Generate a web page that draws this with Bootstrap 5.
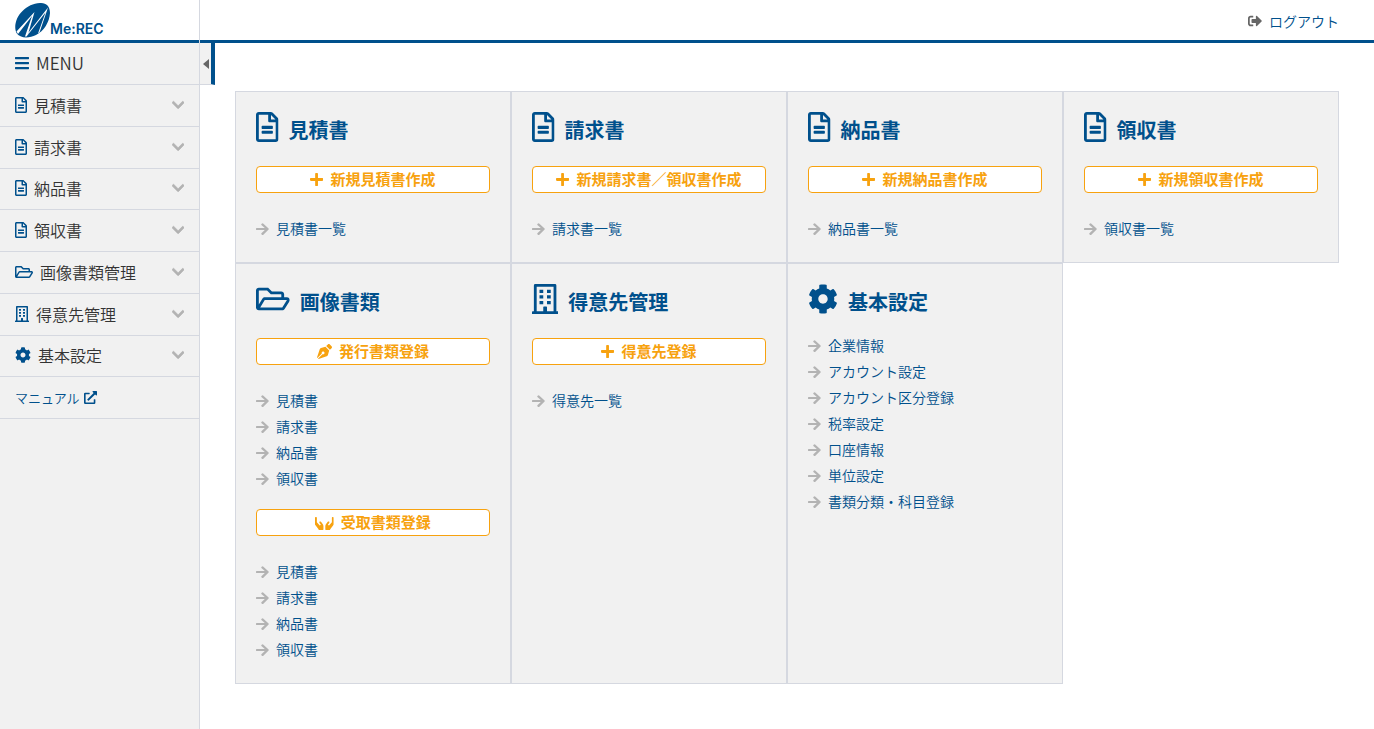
<!DOCTYPE html>
<html lang="ja">
<head>
<meta charset="utf-8">
<meta name="viewport" content="width=device-width, initial-scale=1">
<title>Me:REC</title>
<link href="https://cdn.jsdelivr.net/npm/bootstrap@5.3.0/dist/css/bootstrap.min.css" rel="stylesheet">
<style>
:root { --brand: #00508c; --line: #d5d8e0; --panel: #f1f1f1; --accent: #f7a20f; --muted: #b3b3b3; }
body { font-family: "Noto Sans CJK JP", sans-serif; font-size: 14px; font-weight: 350; color: #333; background: #fff; }
a { color: var(--brand); text-decoration: none; }
a:hover { text-decoration: underline; }
.ico { height: 1em; width: auto; fill: currentColor; flex: none; display: block; }
.app-head { height: 43px; border-bottom: 3px solid var(--brand); }
.brand-box { width: 200px; height: 43px; border-right: 1px solid var(--line); padding-left: 15px; }
.brand-name { font: 600 14px/18px Inter, sans-serif; color: var(--brand); margin-bottom: 5px; }
.logout { padding: 2px 35px 0 0; gap: 7px; }
.logout .ico { color: #666; }
.side { width: 200px; flex: none; background: var(--panel); border-right: 1px solid var(--line); font-size: 16px; }
.menu-title { height: 42px; padding: 0 15px 2px; gap: 7px; border-bottom: 1px solid var(--line); font-size: 17px; }
.menu-title .ico { height: 16px; }
.menu-title .ico, .menu-btn .ico:first-child { color: var(--brand); }
.menu-list { height: 334px; }
.menu-list li { border-bottom: 1px solid var(--line); flex: 1 1 0; }
.menu-btn { padding: 0 15px 1px; gap: 7px; color: #333; background: none; border: 0; font-weight: 350; }
.menu-btn .chev { font-size: 14px; color: var(--muted); margin-left: auto; stroke: currentColor; stroke-width: 24px; }
.manual { padding: 0 15px; gap: 4px; font-size: 13px; }
.fold { top: 0; left: 0; width: 15px; height: 42px; padding: 0 0 0 3px; background: var(--panel); border: 0; border-right: 4px solid var(--brand); border-bottom: 1px solid var(--line); color: #666; }
.fold .ico { height: 10px; }
.board { padding: 48px 35px 45px; }
.tile { background: var(--panel); border: 1px solid var(--line); padding: 20px; }
.tile h2 { font-size: 20px; line-height: 24px; font-weight: 700; color: var(--brand); gap: 10px; margin: 0 0 24px; }
.tile h2 .ico { height: 30px; }
.tile h2.tight { margin-bottom: 19px; }
.btn-make { display: flex; align-items: center; justify-content: center; gap: 7px; width: 100%; height: 27px; padding: 0 0 1px; font-size: 15px; line-height: 24px; font-weight: 700; border-radius: 4px; background: #fff; border: 1px solid var(--accent); color: var(--accent); margin-bottom: 23px; }
.btn-make:hover { background: var(--accent); color: #fff; }
.btn-make .ico { height: 15px; }
.links { margin: 0; }
.links + .btn-make { margin-top: 17px; }
.links a { display: flex; align-items: flex-start; gap: 7px; height: 26px; line-height: 24px; }
.links a::before { content: ""; flex: none; width: 13px; height: 14px; margin-top: 6px; background: var(--muted); clip-path: path("M5.4 2.1 6.1 1.4Q6.6 .9 7.1 1.4L12.6 6.5Q13 7 12.6 7.5L7.1 12.9Q6.6 13.3 6.1 12.9L5.4 12.2Q5 11.7 5.4 11.2L8.8 8.1H.7Q0 8.1 0 7.5V6.5Q0 5.9 .7 5.9H8.8L5.4 3.1Q5 2.6 5.4 2.1Z"); }
</style>
</head>
<body class="min-vh-100 d-flex flex-column">
<svg class="d-none" aria-hidden="true">
<symbol id="bars" viewBox="0 0 448 512"><path d="M16 132h416c8.800 0 16-7.200 16-16V76c0-8.800-7.200-16-16-16H16C7.200 60 0 67.200 0 76v40c0 8.800 7.200 16 16 16zm0 160h416c8.800 0 16-7.200 16-16v-40c0-8.800-7.200-16-16-16H16c-8.800 0-16 7.200-16 16v40c0 8.800 7.200 16 16 16zm0 160h416c8.800 0 16-7.200 16-16v-40c0-8.800-7.200-16-16-16H16c-8.800 0-16 7.200-16 16v40c0 8.800 7.200 16 16 16z"/></symbol>
<symbol id="file" viewBox="0 0 384 512"><path d="M288 248v28c0 6.600-5.400 12-12 12H108c-6.600 0-12-5.400-12-12v-28c0-6.600 5.400-12 12-12h168c6.600 0 12 5.400 12 12zm-12 72H108c-6.600 0-12 5.400-12 12v28c0 6.600 5.400 12 12 12h168c6.600 0 12-5.400 12-12v-28c0-6.600-5.400-12-12-12zm108-188.100V464c0 26.500-21.500 48-48 48H48c-26.500 0-48-21.500-48-48V48C0 21.500 21.500 0 48 0h204.100C264.800 0 277 5.100 286 14.100L369.900 98c9 8.900 14.100 21.200 14.100 33.900zm-128-80V128h76.100L256 51.900zM336 464V176H232c-13.300 0-24-10.700-24-24V48H48v416h288z"/></symbol>
<symbol id="folder" viewBox="0 0 576 512"><path fill-rule="evenodd" d="M527.900 224H480v-48c0-26.500-21.500-48-48-48H272l-64-64H48C21.500 64 0 85.500 0 112v288c0 26.500 21.500 48 48 48h400c16.500 0 31.900-8.500 40.700-22.600l79.900-128c20-31.900-3-73.400-40.700-73.400zM48 118c0-3.300 2.700-6 6-6h134.100l64 64H426c3.300 0 6 2.700 6 6v42H152c-16.800 0-32.400 8.800-41.100 23.200L48 351.400zm400 282H72l77.200-128H528z"/></symbol>
<symbol id="building" viewBox="0 0 448 512"><path fill-rule="evenodd" d="M0 476q0-12 12-12H32V24Q32 0 56 0H392q24 0 24 24V464H436q12 0 12 12V512H0ZM80 48V464H192V396q0-12 12-12H244q12 0 12 12V464H368V48Z"/><path d="M128 96h64v56h-64zM256 96h64v56h-64zM128 192h64v56h-64zM256 192h64v56h-64zM128 288h64v56h-64zM256 288h64v56h-64z"/></symbol>
<symbol id="cog" viewBox="0 0 512 512"><path d="M487.400 315.700l-42.600-24.600c4.300-23.200 4.300-47 0-70.200l42.600-24.600c4.900-2.800 7.100-8.600 5.500-14-11.100-35.600-30-67.800-54.700-94.600-3.800-4.100-10-5.100-14.800-2.300L380.800 110c-17.900-15.400-38.500-27.300-60.800-35.100V25.800c0-5.600-3.900-10.500-9.400-11.700-36.700-8.200-74.300-7.800-109.200 0-5.500 1.200-9.400 6.100-9.400 11.700V75c-22.200 7.900-42.800 19.800-60.800 35.100L88.700 85.500c-4.900-2.800-11-1.900-14.800 2.300-24.700 26.700-43.600 58.900-54.700 94.600-1.700 5.400.6 11.200 5.500 14L67.300 221c-4.300 23.200-4.300 47 0 70.200l-42.600 24.600c-4.900 2.800-7.100 8.600-5.500 14 11.100 35.600 30 67.800 54.700 94.600 3.800 4.100 10 5.100 14.800 2.300l42.600-24.600c17.900 15.400 38.500 27.300 60.800 35.100v49.200c0 5.600 3.900 10.500 9.400 11.700 36.700 8.200 74.300 7.800 109.200 0 5.500-1.200 9.400-6.100 9.400-11.700v-49.200c22.200-7.900 42.800-19.800 60.800-35.100l42.600 24.600c4.900 2.800 11 1.900 14.800-2.300 24.700-26.700 43.600-58.900 54.700-94.600 1.500-5.500-.7-11.300-5.600-14.100zM256 336c-44.100 0-80-35.900-80-80s35.900-80 80-80 80 35.900 80 80-35.900 80-80 80z"/></symbol>
<symbol id="chev" viewBox="0 0 448 512"><path d="M207 381.500L12.700 187.100c-9.400-9.400-9.400-24.600 0-33.900l22.700-22.700c9.400-9.400 24.500-9.400 33.900 0L224 284.500l154.700-154c9.400-9.300 24.500-9.300 33.900 0l22.700 22.700c9.400 9.400 9.400 24.600 0 33.900L241 381.500c-9.400 9.400-24.600 9.400-34 0z"/></symbol>
<symbol id="plus" viewBox="0 0 448 512"><path d="M416 208H272V64c0-17.700-14.300-32-32-32h-32c-17.700 0-32 14.300-32 32v144H32c-17.700 0-32 14.300-32 32v32c0 17.700 14.300 32 32 32h144v144c0 17.700 14.300 32 32 32h32c17.700 0 32-14.300 32-32V304h144c17.700 0 32-14.300 32-32v-32c0-17.700-14.300-32-32-32z"/></symbol>
<symbol id="signout" viewBox="0 0 512 512"><path d="M497 273L329 441c-15 15-41 4.500-41-17v-96H152c-13.300 0-24-10.700-24-24v-96c0-13.300 10.700-24 24-24h136V88c0-21.400 25.900-32 41-17l168 168c9.300 9.400 9.300 24.600 0 34zM192 436v-40c0-6.600-5.400-12-12-12H96c-17.700 0-32-14.300-32-32V160c0-17.700 14.300-32 32-32h84c6.600 0 12-5.400 12-12V76c0-6.600-5.400-12-12-12H96c-53 0-96 43-96 96v192c0 53 43 96 96 96h84c6.600 0 12-5.400 12-12z"/></symbol>
<symbol id="ext" viewBox="0 0 512 512"><path d="M432 320H400a16 16 0 0 0-16 16V448H64V128H208a16 16 0 0 0 16-16V80a16 16 0 0 0-16-16H48A48 48 0 0 0 0 112V464a48 48 0 0 0 48 48H400a48 48 0 0 0 48-48V336A16 16 0 0 0 432 320ZM488 0h-128c-21.400 0-32 25.900-17 41l35.700 35.700L135 320.400a24 24 0 0 0 0 34L157.700 377a24 24 0 0 0 34 0L435.300 133.300 471 169c15 15 41 4.500 41-17V24A24 24 0 0 0 488 0Z"/></symbol>
<symbol id="nib" viewBox="0 0 512 512"><path d="M136.600 138.800a64 64 0 0 0-43.300 41.300L0 460l14.700 14.700L164.800 324.600c-3-6.300-4.800-13.200-4.800-20.600 0-26.500 21.500-48 48-48s48 21.500 48 48-21.500 48-48 48c-7.400 0-14.300-1.800-20.600-4.800L37.300 497.300 52 512l279.900-93.300a64 64 0 0 0 41.300-43.300L416 224 288 96zM497.900 74.200l-60.100-60.100c-18.800-18.800-49.200-18.800-67.900 0l-56.500 56.500 128 128 56.500-56.500c18.800-18.800 18.800-49.200 0-67.900z"/></symbol>
<symbol id="hands" viewBox="0 0 640 512"><path id="hand" d="M204.800 230.400c-10.600-14.100-30.700-17-44.800-6.400-14.100 10.600-17 30.700-6.400 44.800l38.100 50.800c4.800 6.400 4.100 15.300-1.500 20.900l-12.800 12.800c-6.700 6.700-17.600 6.200-23.600-1.100L64 244.400V96c0-17.700-14.300-32-32-32S0 78.300 0 96v218.400c0 10.900 3.700 21.500 10.500 30l104.100 134.300c5 6.500 8.400 13.900 10.400 21.700 1.800 6.900 8.100 11.600 15.300 11.600H272c8.800 0 16-7.200 16-16V384c0-27.700-9-54.600-25.600-76.800z"/><use href="#hand" transform="matrix(-1 0 0 1 640 0)"/></symbol>
</svg>

<header class="app-head d-flex justify-content-between">
  <a class="brand-box d-flex align-items-end position-relative text-decoration-none" href="#">
    <svg class="align-self-start" width="35" height="38" viewBox="0 0 35 38" aria-hidden="true">
      <path fill="#00508c" d="M25 3C31 2.500 35 6 35 13C34.500 22 29 31 21 35C14 38.500 5 38.500 1.500 33C-1.500 27 1 17 7.500 11C12.500 6 18 3.500 25 3Z"/>
      <path fill="#fff" d="M1.500 31.500L19.500 12L13.500 32.500L33 7.500L24.500 32.500L23 33.500L30.500 12.500L11.500 36.500H10L17 16L3 34Z"/>
      <path fill="#00508c" d="M12 35L16.500 29.500L13.600 33.200Z"/>
    </svg>
    <span class="brand-name">Me:REC</span>
  </a>
  <a class="logout d-flex align-items-center" href="#"><svg class="ico" viewBox="0 0 512 512"><use href="#signout"/></svg>ログアウト</a>
</header>

<div class="d-flex flex-grow-1">
  <nav class="side" aria-label="メニュー">
    <div class="menu-title d-flex align-items-center"><svg class="ico" viewBox="0 0 448 512"><use href="#bars"/></svg>MENU</div>
    <ul class="menu-list list-unstyled d-flex flex-column mb-0">
      <li><button type="button" class="menu-btn d-flex align-items-center w-100 h-100"><svg class="ico" viewBox="0 0 384 512"><use href="#file"/></svg>見積書<svg class="ico chev" viewBox="0 0 448 512"><use href="#chev"/></svg></button></li>
      <li><button type="button" class="menu-btn d-flex align-items-center w-100 h-100"><svg class="ico" viewBox="0 0 384 512"><use href="#file"/></svg>請求書<svg class="ico chev" viewBox="0 0 448 512"><use href="#chev"/></svg></button></li>
      <li><button type="button" class="menu-btn d-flex align-items-center w-100 h-100"><svg class="ico" viewBox="0 0 384 512"><use href="#file"/></svg>納品書<svg class="ico chev" viewBox="0 0 448 512"><use href="#chev"/></svg></button></li>
      <li><button type="button" class="menu-btn d-flex align-items-center w-100 h-100"><svg class="ico" viewBox="0 0 384 512"><use href="#file"/></svg>領収書<svg class="ico chev" viewBox="0 0 448 512"><use href="#chev"/></svg></button></li>
      <li><button type="button" class="menu-btn d-flex align-items-center w-100 h-100"><svg class="ico" viewBox="0 0 576 512"><use href="#folder"/></svg>画像書類管理<svg class="ico chev" viewBox="0 0 448 512"><use href="#chev"/></svg></button></li>
      <li><button type="button" class="menu-btn d-flex align-items-center w-100 h-100"><svg class="ico" viewBox="0 0 448 512"><use href="#building"/></svg>得意先管理<svg class="ico chev" viewBox="0 0 448 512"><use href="#chev"/></svg></button></li>
      <li><button type="button" class="menu-btn d-flex align-items-center w-100 h-100"><svg class="ico" viewBox="0 0 512 512"><use href="#cog"/></svg>基本設定<svg class="ico chev" viewBox="0 0 448 512"><use href="#chev"/></svg></button></li>
      <li><a class="manual d-flex align-items-center h-100" href="#">マニュアル<svg class="ico" viewBox="0 0 512 512"><use href="#ext"/></svg></a></li>
    </ul>
  </nav>

  <main class="flex-grow-1 position-relative">
    <button type="button" class="fold position-absolute" aria-label="メニューを閉じる"><svg class="ico" viewBox="0 0 6 10"><path d="M6 0V10L0 5Z"/></svg></button>
    <div class="board">
      <div class="row row-cols-4 g-0">
        <section class="col tile">
          <h2 class="d-flex align-items-end"><svg class="ico" viewBox="0 0 384 512"><use href="#file"/></svg>見積書</h2>
          <button type="button" class="btn-make"><svg class="ico" viewBox="0 0 448 512"><use href="#plus"/></svg>新規見積書作成</button>
          <ul class="links list-unstyled"><li><a href="#">見積書一覧</a></li></ul>
        </section>
        <section class="col tile">
          <h2 class="d-flex align-items-end"><svg class="ico" viewBox="0 0 384 512"><use href="#file"/></svg>請求書</h2>
          <button type="button" class="btn-make"><svg class="ico" viewBox="0 0 448 512"><use href="#plus"/></svg>新規請求書／領収書作成</button>
          <ul class="links list-unstyled"><li><a href="#">請求書一覧</a></li></ul>
        </section>
        <section class="col tile">
          <h2 class="d-flex align-items-end"><svg class="ico" viewBox="0 0 384 512"><use href="#file"/></svg>納品書</h2>
          <button type="button" class="btn-make"><svg class="ico" viewBox="0 0 448 512"><use href="#plus"/></svg>新規納品書作成</button>
          <ul class="links list-unstyled"><li><a href="#">納品書一覧</a></li></ul>
        </section>
        <section class="col tile">
          <h2 class="d-flex align-items-end"><svg class="ico" viewBox="0 0 384 512"><use href="#file"/></svg>領収書</h2>
          <button type="button" class="btn-make"><svg class="ico" viewBox="0 0 448 512"><use href="#plus"/></svg>新規領収書作成</button>
          <ul class="links list-unstyled"><li><a href="#">領収書一覧</a></li></ul>
        </section>
        <section class="col tile">
          <h2 class="d-flex align-items-end"><svg class="ico" viewBox="0 0 576 512"><use href="#folder"/></svg>画像書類</h2>
          <button type="button" class="btn-make"><svg class="ico" viewBox="0 0 512 512"><use href="#nib"/></svg>発行書類登録</button>
          <ul class="links list-unstyled">
            <li><a href="#">見積書</a></li><li><a href="#">請求書</a></li><li><a href="#">納品書</a></li><li><a href="#">領収書</a></li>
          </ul>
          <button type="button" class="btn-make"><svg class="ico" viewBox="0 0 640 512"><use href="#hands"/></svg>受取書類登録</button>
          <ul class="links list-unstyled">
            <li><a href="#">見積書</a></li><li><a href="#">請求書</a></li><li><a href="#">納品書</a></li><li><a href="#">領収書</a></li>
          </ul>
        </section>
        <section class="col tile">
          <h2 class="d-flex align-items-end"><svg class="ico" viewBox="0 0 448 512"><use href="#building"/></svg>得意先管理</h2>
          <button type="button" class="btn-make"><svg class="ico" viewBox="0 0 448 512"><use href="#plus"/></svg>得意先登録</button>
          <ul class="links list-unstyled"><li><a href="#">得意先一覧</a></li></ul>
        </section>
        <section class="col tile">
          <h2 class="tight d-flex align-items-end"><svg class="ico" viewBox="0 0 512 512"><use href="#cog"/></svg>基本設定</h2>
          <ul class="links list-unstyled">
            <li><a href="#">企業情報</a></li><li><a href="#">アカウント設定</a></li><li><a href="#">アカウント区分登録</a></li><li><a href="#">税率設定</a></li><li><a href="#">口座情報</a></li><li><a href="#">単位設定</a></li><li><a href="#">書類分類・科目登録</a></li>
          </ul>
        </section>
      </div>
    </div>
  </main>
</div>
<script src="https://cdn.jsdelivr.net/npm/bootstrap@5.3.0/dist/js/bootstrap.bundle.min.js"></script>
</body>
</html>
